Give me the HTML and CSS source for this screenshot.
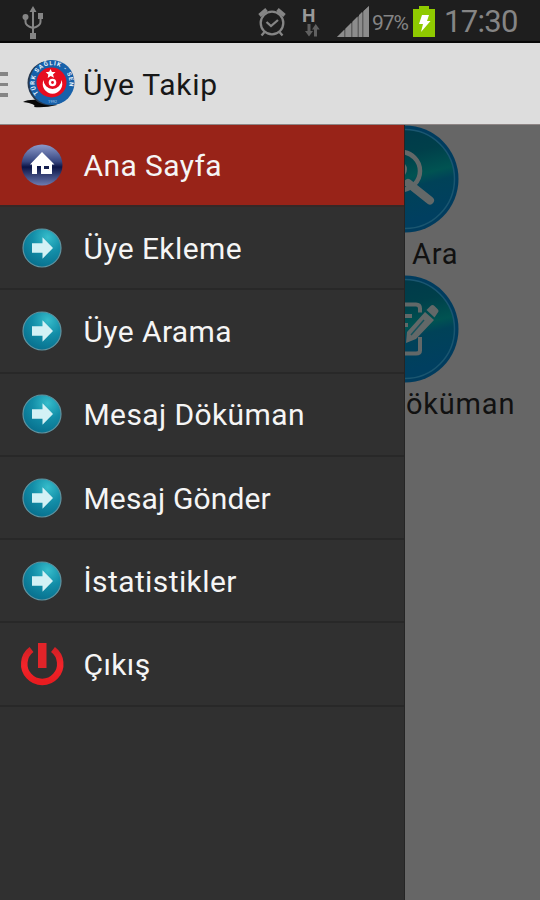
FILE: index.html
```html
<!DOCTYPE html>
<html lang="tr">
<head>
<meta charset="utf-8">
<title>Üye Takip</title>
<link rel="stylesheet" href="styles.css">
</head>
<body>
<svg class="defs" width="0" height="0" aria-hidden="true">
  <defs>
    <radialGradient id="teal" cx=".65" cy=".22" r=".8"><stop offset="0" stop-color="#36bdcb"/><stop offset=".5" stop-color="#138ea8"/><stop offset="1" stop-color="#08718f"/></radialGradient>
    <linearGradient id="navy" x2="0" y2="1"><stop offset="0" stop-color="#8c9acb"/><stop offset=".42" stop-color="#36457f"/><stop offset=".55" stop-color="#0b1447"/><stop offset="1" stop-color="#6d7cb2"/></linearGradient>
    <linearGradient id="red" x2="0" y2="1"><stop offset="0" stop-color="#d52025"/><stop offset=".5" stop-color="#f3242a"/><stop offset="1" stop-color="#e81c20"/></linearGradient>
    <linearGradient id="disc" x2=".25" y2="1"><stop offset="0" stop-color="#00384a"/><stop offset=".35" stop-color="#003f4a"/><stop offset=".58" stop-color="#005352"/><stop offset=".68" stop-color="#004258"/><stop offset="1" stop-color="#003f60"/></linearGradient>
    <symbol id="arrow" viewBox="0 0 42 42"><circle cx="21" cy="21" r="19" fill="url(#teal)" stroke="#5f929f" stroke-width="1.2"/><path d="M11 16.300h10.500v-6L32 21 21.500 31.700v-6H11z" fill="#d3f1f5"/></symbol>
  </defs>
</svg>
<header class="status">
  <svg class="usb" viewBox="0 0 22 34"><g fill="none" stroke="#858585" stroke-width="2"><path d="M11 4v24M3.500 11v5q0 4 7.500 6M18.500 11v5q0 4-7.500 6"/></g><path d="M11 0l3.500 6h-7zM8 27h6v6H8zM16 7h5v6h-5z" fill="#858585"/><circle cx="3.500" cy="11" r="3" fill="#858585"/></svg>
  <svg class="alarm" viewBox="0 0 28 30"><g fill="none" stroke="#858585" stroke-width="2.300"><circle cx="14" cy="16" r="11.300"/><path d="M8.500 15l4.500 4 7-6M6.500 25l-3 3.500M21.500 25l3 3.500"/><path d="M1.500 8.500l7-6M26.500 8.500l-7-6" stroke-width="3.800"/></g></svg>
  <div class="net"><b>H</b><svg viewBox="0 0 16 13"><path d="M3.500 0h3v7H9l-4 5.500L1 7h2.500zM10 12.500V5.500H8L11.700 0l4 5.500H13v7z" fill="#606060"/></svg></div>
  <svg class="signal" viewBox="0 0 32 31"><path d="M0 31L32 0v31z" fill="#606060"/><path d="M0 31l7-7v7zM8.500 31v-8.500l5.500-5.500v14zM15.500 31V15.500L20.500 10.500V31zM22 31V9l3-3v25zM26.500 31V5L32 0v31z" fill="#8c8c8c"/></svg>
  <span class="pct">97%</span>
  <svg class="battery" viewBox="0 0 22 31"><path d="M6 0h10v3h6v28H0V3h6z" fill="#8fca00"/><path d="M9 9h7l-2 6h3.500L8 26l2-8H6z" fill="#fff"/></svg>
  <time class="clock">17:30</time>
</header>
<div class="bar">
  <div class="burger"><i></i><i></i><i></i></div>
  <svg class="logo" viewBox="0 0 54 48">
    <path d="M0 42q5-3 17-2l17 5q-12 3-23 2 3-3-11-5z" fill="#080808"/>
    <circle cx="27" cy="23" r="22.500" fill="#273950"/>
    <circle cx="29" cy="22.500" r="22.500" fill="#1761aa"/>
    <circle cx="28.500" cy="22.500" r="15" fill="#e60d20"/>
    <path d="M20.500 20a9.800 9.800 0 1 0 18 0 8.200 8.200 0 1 1-18 0z" fill="#fff"/>
    <circle cx="29.500" cy="22.500" r="3.800" fill="#fff"/><circle cx="29.500" cy="22.500" r="1.400" fill="#e60d20"/>
    <path d="M27.500 9l1.500 3 3.500 0-2.500 2.500 1 3.200-3.300-1.700-3 1.900.6-3.400-2.600-2.300 3.500-.5z" fill="#fff"/>
    <path id="ring" d="M15.500 33.500A17.400 17.400 0 1 1 43.500 32" fill="none"/>
    <text class="ringtext"><textPath href="#ring" textLength="70">TÜRK SAĞLIK - SEN</textPath></text>
    <text class="year" x="25" y="43">1992</text>
  </svg>
  <h1>Üye Takip</h1>
</div>
<main>
  <nav>
    <a class="active"><svg viewBox="0 0 42 42"><circle cx="21" cy="21" r="20.500" fill="url(#navy)"/><path d="M9 20.500L21 8l12.500 12.500H31V30H20v-8h-4v8h-5v-9.500z" fill="#fff"/><path d="M23 22h5v3h-5z" fill="#16204f"/></svg><span>Ana Sayfa</span></a>
    <a><svg><use href="#arrow"/></svg><span>Üye Ekleme</span></a>
    <a><svg><use href="#arrow"/></svg><span>Üye Arama</span></a>
    <a><svg><use href="#arrow"/></svg><span>Mesaj Döküman</span></a>
    <a><svg><use href="#arrow"/></svg><span class="tight">Mesaj Gönder</span></a>
    <a><svg><use href="#arrow"/></svg><span>İstatistikler</span></a>
    <a><svg viewBox="0 0 42 42"><path d="M10.500 6.500A18 18 0 1 0 32 6.500" fill="none" stroke="url(#red)" stroke-width="6.500"/><path d="M17 0h8.500v25H17z" fill="#e12429"/></svg><span>Çıkış</span></a>
  </nav>
  <section>
    <div class="tile">
      <svg viewBox="0 0 55 108"><circle cx="0" cy="54" r="53.500" fill="#003c5e"/><circle cx="0" cy="54" r="49.500" fill="url(#disc)" stroke="#1a5670" stroke-width="1.500"/><circle cx="-4" cy="46" r="19" fill="none" stroke="#626868" stroke-width="4.500"/><path d="M3 58l22 17.500" stroke="#626868" stroke-width="8" stroke-linecap="round"/><path d="M0 39q4 5 0 11z" fill="#626868"/></svg>
      <span class="ara">Ara</span>
    </div>
    <div class="tile">
      <svg viewBox="0 0 55 108"><circle cx="0" cy="54" r="53.500" fill="#003c5e"/><circle cx="0" cy="54" r="49.500" fill="url(#disc)" stroke="#1a5670" stroke-width="1.500"/><g fill="none" stroke="#626868" stroke-width="4"><path d="M-5 29.500H11q4 0 4 4v4M-5 78.500H11q4 0 4-3V62M0 41h7M0 50h3"/></g><path d="M1 68l1-11 18-20 9 8-18 19zM21.500 35l4-4q2-2 4 0l3 3q2 2 0 4l-3 4.500z" fill="#626868"/><path d="M6 60l13-15" stroke="#17525b" stroke-width="1.500"/></svg>
      <span>öküman</span>
    </div>
  </section>
</main>
</body>
</html>
```
FILE: styles.css
```css
* { box-sizing: border-box; }
body {
  margin: 0;
  width: 540px;
  height: 900px;
  overflow: hidden;
  display: flex;
  flex-direction: column;
  font-family: Roboto, sans-serif;
  background: #666;
}
svg { display: block; flex: none; }
.defs { position: absolute; }
.status {
  height: 43px;
  flex: none;
  display: flex;
  align-items: flex-start;
  background: #1e1e1e;
  border-bottom: 2px solid #080808;
  color: #858585;
}
.usb { width: 22px; height: 34px; margin: 6px 0 0 22px; }
.alarm { width: 28px; height: 30px; margin: 7px 0 0 214px; }
.net { width: 18px; margin: 7px 0 0 16px; }
.net b { display: block; font-size: 19px; line-height: 17px; color: #999; }
.net svg { width: 16px; height: 13px; margin: 0 0 0 2px; }
.signal { width: 32px; height: 31px; margin: 6px 0 0 17px; }
.pct { font-size: 21px; line-height: 24px; margin: 11px 0 0 3px; width: 41px; letter-spacing: -1px; }
.battery { width: 22px; height: 31px; margin-top: 6px; }
.clock { font-size: 31px; line-height: 36px; margin: 4px 0 0 9px; letter-spacing: -.7px; }
.bar {
  height: 82px;
  flex: none;
  display: flex;
  align-items: center;
  background: #ddd;
  border-bottom: 1px solid #8d8585;
}
.burger { width: 8px; display: grid; gap: 7px; padding-top: 2px; }
.burger i { height: 3.500px; background: #858585; }
.logo { width: 54px; height: 48px; margin-left: 15px; }
.ringtext { font: bold 6px Roboto, sans-serif; fill: #e8f2fa; }
.year { font: 4px Roboto, sans-serif; fill: #a9cbea; }
h1 { margin: 2px 0 0 6px; font-size: 30px; font-weight: 400; line-height: 40px; color: #171717; letter-spacing: .75px; }
main { flex: 1; display: grid; grid-template-columns: 405px 135px; min-height: 0; }
nav { background: #303030; border-right: 1px solid #252525; }
nav a {
  height: 83.300px;
  display: flex;
  align-items: center;
  gap: 20.500px;
  padding-left: 21px;
  border-bottom: 2px solid #282828;
  color: #f5f5f5;
  font-size: 30px;
  line-height: 40px;
  letter-spacing: .4px;
}
nav a span { padding-top: 2px; }
nav a .tight { letter-spacing: .15px; }
nav svg { width: 42px; height: 42px; overflow: visible; }
nav a.active { height: 82px; background: #982318; border-bottom-color: #352827; }
section { overflow: hidden; background: #666; }
.tile { height: 150px; }
.tile svg { width: 55px; height: 108px; }
.tile span { display: block; margin-left: 1px; font-size: 29px; line-height: 43px; color: #111; letter-spacing: .8px; }
.tile .ara { margin-left: 7px; }
```
